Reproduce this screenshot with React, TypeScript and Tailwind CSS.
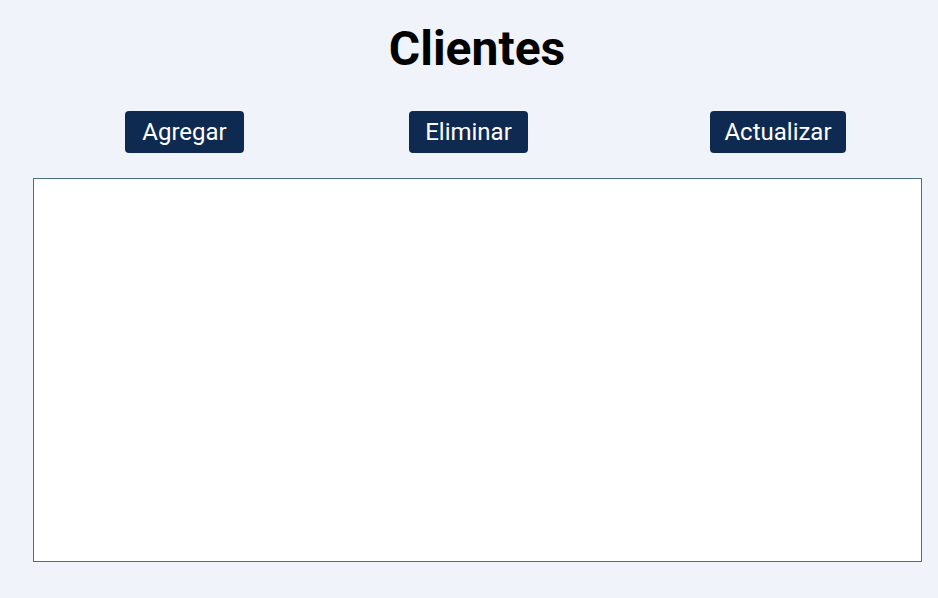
export default function App() {
  const btn =
    "h-[42px] flex items-center justify-center rounded-[4px] bg-[#0f2a50] text-white text-[24px] leading-none";
  return (
    <div
      className="min-h-screen w-full bg-[#f0f4fa] flex flex-col"
      style={{ fontFamily: "Roboto, 'Liberation Sans', sans-serif" }}
    >
      <div className="pl-[33px] pr-[17px] pt-[25px]">
        <h1 className="text-center text-[48px] leading-[48px] font-bold text-black">Clientes</h1>
      </div>
      <div className="flex pl-[125px] mt-[38px]">
        <button className={`${btn} w-[119px]`}>Agregar</button>
        <button className={`${btn} w-[119px] ml-[165px]`}>Eliminar</button>
        <button className={`${btn} w-[136px] ml-[182px]`}>Actualizar</button>
      </div>
      <div className="ml-[33px] mt-[25px] w-[889px] h-[384px] bg-white border border-[#4a7080]"></div>
    </div>
  );
}
